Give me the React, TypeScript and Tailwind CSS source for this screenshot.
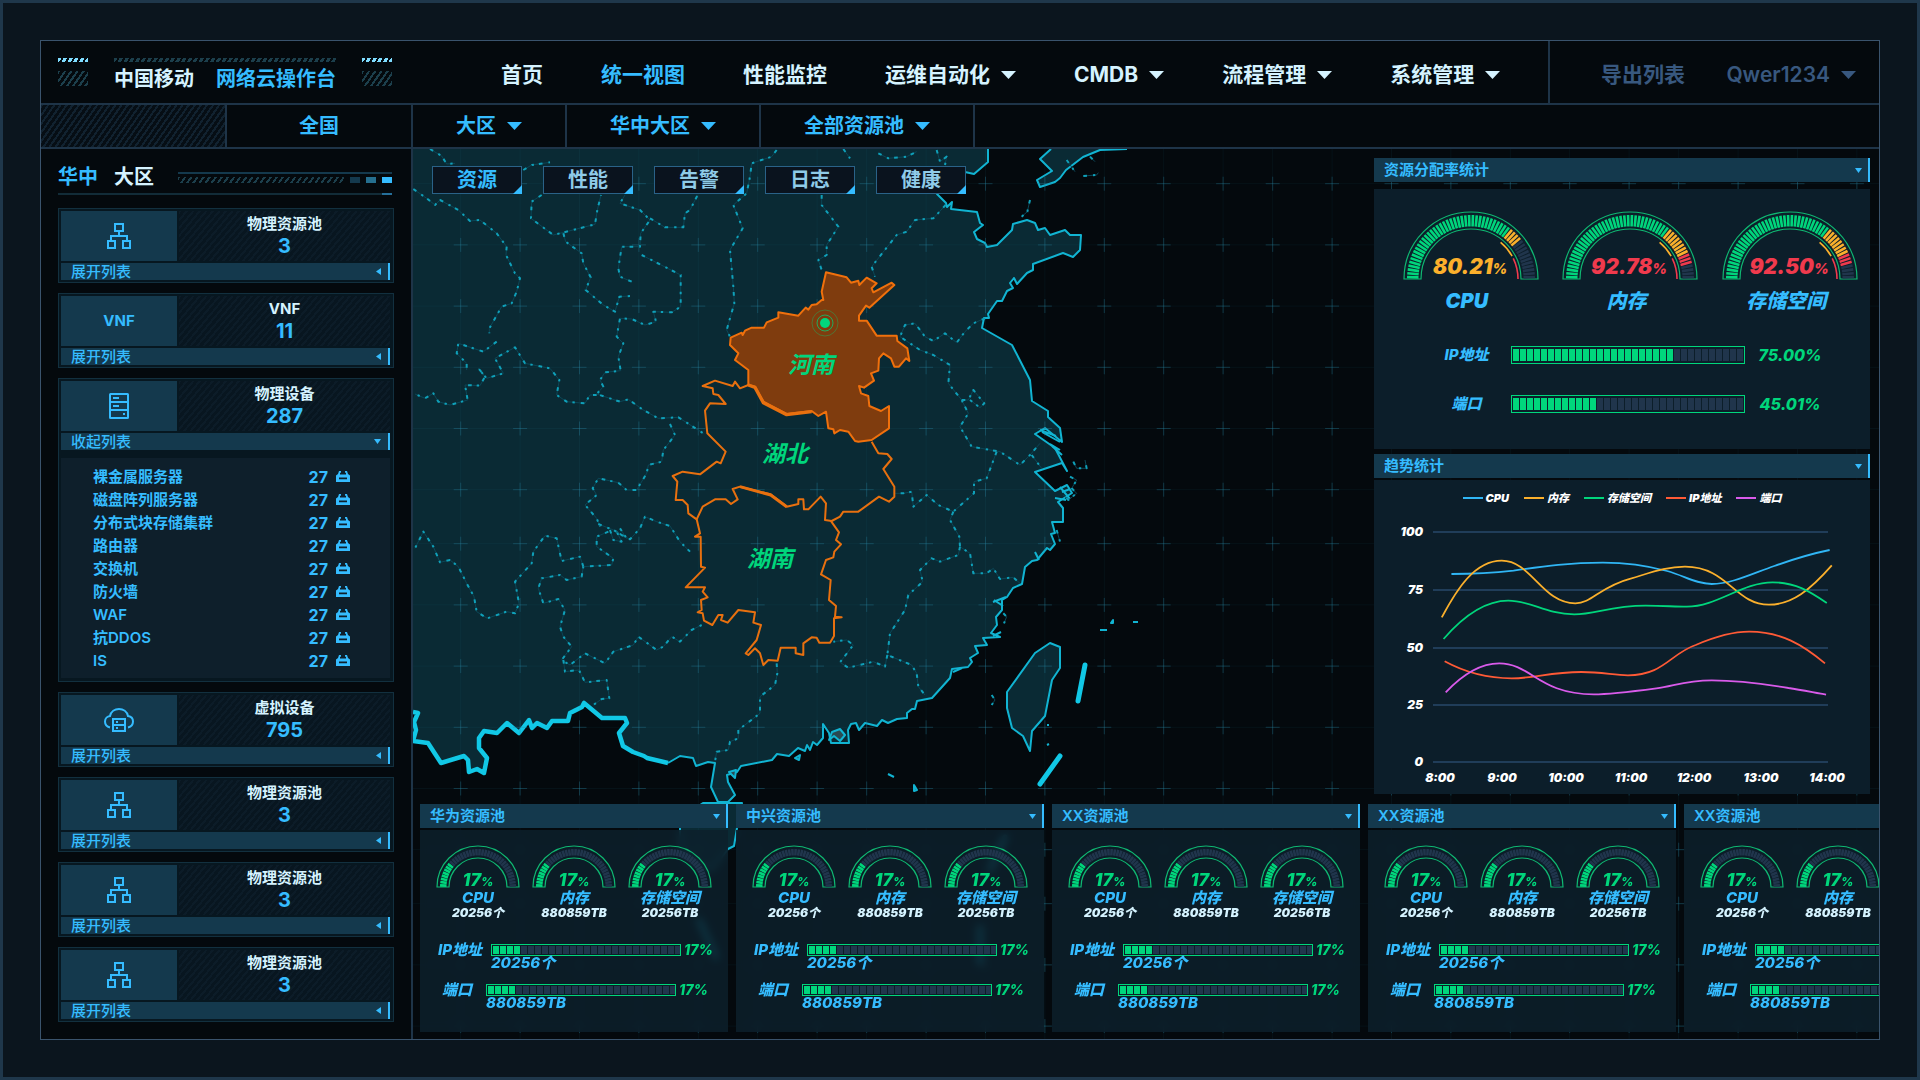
import type { ReactNode } from "react";

function Caret({ className = "" }: { className?: string }) {
  return (
    <svg className={"h-2 w-[15px] shrink-0 fill-current " + className} viewBox="0 0 15 8" aria-hidden="true">
      <path d="M0 0H15L7.500 8Z" />
    </svg>
  );
}

function NetworkIcon() {
  return (
    <svg width="24" height="26" viewBox="0 0 24 26" fill="none" stroke="currentColor" strokeWidth="2" aria-hidden="true">
      <rect x="8" y="1" width="8" height="7" />
      <path d="M12 9V13M4 17V13H20V17" />
      <rect x="1" y="18" width="7" height="7" />
      <rect x="16" y="18" width="7" height="7" />
    </svg>
  );
}

function ServerIcon() {
  return (
    <svg width="20" height="26" viewBox="0 0 20 26" fill="none" stroke="currentColor" strokeWidth="2" aria-hidden="true">
      <rect x="1" y="1" width="18" height="24" rx="0.500" />
      <path d="M1 9H19M1 17H19M4 5H10M4 13H10M14 21H16" />
    </svg>
  );
}

function CloudIcon() {
  return (
    <svg width="30" height="24" viewBox="0 0 30 24" fill="none" stroke="currentColor" strokeWidth="2" aria-hidden="true">
      <path d="M6 19.500C2.500 18.500 1 16 1 13.500C1 10.500 3.500 8.300 6 8C7 3.500 10.800 1 15 1C19.200 1 23 3.500 24 8C27 8.500 29 10.700 29 13.500C29 16.200 27.300 18.800 24 19.500" />
      <rect x="9" y="11" width="12" height="12" />
      <path d="M9 17H21" />
      <path d="M12 14H14M12 20H14" />
    </svg>
  );
}

function DeviceIcon() {
  return (
    <svg width="14" height="11" viewBox="0 0 14 11" fill="currentColor" aria-hidden="true">
      <path fillRule="evenodd" d="M3 0H5V1.500L4 2V3.500H10V2L9 1.500V0H11L12 3L14 4.500V11H0V4.500L2 3ZM3 6.500V8.300H11V6.500Z" />
    </svg>
  );
}

function ResourceCard({
  icon,
  title,
  count,
  children,
}: {
  icon: ReactNode;
  title: string;
  count: string;
  children?: ReactNode;
}) {
  const open = Boolean(children);
  return (
    <section className="border border-[#12303f] bg-[#071720] p-[2px] pr-[3px]">
      <div className="flex h-[50px] gap-[2px]">
        <div className="flex w-[116px] items-center justify-center bg-[#14394d] text-[15px] font-bold text-[#35bcff]">
          {icon}
        </div>
        <div className="flex flex-1 flex-col items-center bg-[#081620] bg-[repeating-linear-gradient(130deg,#0c1c28_0_2px,#081620_2px_5px)] pt-[3px]">
          <h3 className="text-[15px] leading-5 font-bold text-[#d5f3ff]">{title}</h3>
          <p className="text-xl leading-6 font-bold text-[#35bcff]">{count}</p>
        </div>
      </div>
      <button
        type="button"
        aria-expanded={open}
        className="mt-[2px] flex h-[17px] w-full items-center justify-between border-r-2 border-[#35bcff] bg-[#14394d] pr-[7px] pl-[10px] text-[15px] leading-[17px] font-medium text-[#35bcff]"
      >
        {open ? "收起列表" : "展开列表"}
        {open ? (
          <svg width="7" height="5" viewBox="0 0 7 5" fill="currentColor" aria-hidden="true">
            <path d="M0 0H7L3.500 5Z" />
          </svg>
        ) : (
          <svg width="5" height="7" viewBox="0 0 5 7" fill="currentColor" aria-hidden="true">
            <path d="M5 0V7L0 3.500Z" />
          </svg>
        )}
      </button>
      {children}
    </section>
  );
}

const devices = ["裸金属服务器", "磁盘阵列服务器", "分布式块存储集群", "路由器", "交换机", "防火墙", "WAF", "抗DDOS", "IS"];

function Sidebar() {
  return (
    <aside className="w-[372px] shrink-0 border-r-2 border-[#1e3448] pt-4 pr-[17px] pb-[17px] pl-[17px]">
      <header className="mr-[2px] flex h-7 justify-between">
        <h2 className="flex gap-4 text-xl leading-6 font-bold">
          <span className="text-[#35bcff]">华中</span>
          <span className="text-[#d5f3ff]">大区</span>
        </h2>
        <div className="flex w-[214px] flex-col gap-[3px] pt-[7px]">
          <div className="h-[2px] bg-[#14394d]" />
          <div className="flex h-[6px] gap-[6px]">
            <div className="flex-1 bg-[repeating-linear-gradient(125deg,#1c3f4c_0_2px,transparent_2px_5px)]" />
            <div className="w-[10px] bg-[#14394d]" />
            <div className="w-[10px] bg-[#256f8f]" />
            <div className="w-[10px] bg-[#35bcff]" />
          </div>
        </div>
      </header>
      <div className="mr-[2px] mb-[13px] flex h-[2px] justify-end bg-[#122c38]">
        <div className="w-[10px] bg-[#256f9a]" />
      </div>
      <div className="flex flex-col gap-[10px]">
        <ResourceCard icon={<NetworkIcon />} title="物理资源池" count="3" />
        <ResourceCard icon="VNF" title="VNF" count="11" />
        <ResourceCard icon={<ServerIcon />} title="物理设备" count="287">
          <ul className="mt-2 mb-px flex flex-col bg-[#0e1f2b] pt-[7px] pr-10 pb-[6px] pl-8">
            {devices.map((name) => (
              <li key={name} className="flex h-[23px] items-center text-[15px] leading-[23px] font-semibold text-[#35bcff]">
                <span className="flex-1">{name}</span>
                <span className="mr-2 text-base font-bold">27</span>
                <DeviceIcon />
              </li>
            ))}
          </ul>
        </ResourceCard>
        <ResourceCard icon={<CloudIcon />} title="虚拟设备" count="795" />
        <ResourceCard icon={<NetworkIcon />} title="物理资源池" count="3" />
        <ResourceCard icon={<NetworkIcon />} title="物理资源池" count="3" />
        <ResourceCard icon={<NetworkIcon />} title="物理资源池" count="3" />
      </div>
    </aside>
  );
}

function HatchMark() {
  return (
    <div className="flex w-[30px] flex-col gap-[9px]">
      <div className="h-1 bg-[repeating-linear-gradient(120deg,#7fdcff_0_3px,transparent_3px_5px)]" />
      <div className="h-[15px] bg-[repeating-linear-gradient(125deg,#1c3f4c_0_2px,transparent_2px_5px)]" />
    </div>
  );
}

const navItems = [
  { label: "首页", menu: false },
  { label: "统一视图", menu: false, active: true },
  { label: "性能监控", menu: false },
  { label: "运维自动化", menu: true },
  { label: "CMDB", menu: true },
  { label: "流程管理", menu: true },
  { label: "系统管理", menu: true },
];

function TopBar() {
  return (
    <header className="flex h-16 border-b-2 border-[#1e3448] text-[21px] leading-6 font-bold">
      <div className="flex w-[372px] shrink-0 gap-[26px] pt-[17px] pl-[17px]">
        <HatchMark />
        <div className="w-[222px]">
          <div className="h-1 bg-[repeating-linear-gradient(120deg,#1c3f4c_0_3px,transparent_3px_5px)]" />
          <h1 className="mt-[5px] flex justify-between text-xl leading-6 whitespace-nowrap">
            <span className="text-[#d5f3ff]">中国移动</span>
            <span className="text-[#35bcff]">网络云操作台</span>
          </h1>
        </div>
        <HatchMark />
      </div>
      <nav className="flex flex-1 gap-[58px] pt-[22px] pl-[88px] whitespace-nowrap text-[#d5f3ff]">
        {navItems.map((item) =>
          item.menu ? (
            <button key={item.label} type="button" aria-haspopup="menu" className="flex h-6 items-center gap-[11px]">
              {item.label}
              <Caret />
            </button>
          ) : (
            <a key={item.label} href="#" className={item.active ? "h-6 text-[#35bcff]" : "h-6"}>
              {item.label}
            </a>
          ),
        )}
      </nav>
      <div className="flex w-[331px] shrink-0 justify-between border-l-2 border-[#1e3448] pt-[22px] pr-[23px] pl-[51px] font-semibold text-[#38587f]">
        <button type="button" className="h-6">
          导出列表
        </button>
        <button type="button" aria-haspopup="menu" className="flex h-6 items-center gap-[11px]">
          Qwer1234
          <Caret />
        </button>
      </div>
    </header>
  );
}

function FilterSelect({ label, value }: { label: string; value: string }) {
  return (
    <label className="flex items-center gap-[11px] border-r-2 border-[#1e3448] px-[43px]">
      <span className="sr-only">{label}</span>
      <select
        className="field-sizing-content h-9 appearance-none bg-transparent text-xl leading-9 font-bold text-[#35bcff] outline-none"
        defaultValue={value}
      >
        <option value={value}>{value}</option>
      </select>
      <Caret className="pointer-events-none" />
    </label>
  );
}

function FilterBar() {
  return (
    <div className="flex h-11 border-b-2 border-[#1e3448] text-xl font-bold text-[#35bcff]">
      <div className="w-[186px] shrink-0 border-r-2 border-[#1e3448] bg-[repeating-linear-gradient(125deg,#112230_0_2px,#060e15_2px_5px)]" />
      <button type="button" className="w-[186px] shrink-0 border-r-2 border-[#1e3448]">
        全国
      </button>
      <FilterSelect label="范围" value="大区" />
      <FilterSelect label="大区" value="华中大区" />
      <FilterSelect label="资源池" value="全部资源池" />
    </div>
  );
}

const gridCols = Array.from({ length: 25 }, (_, i) => 460.700 + Math.floor(i / 7) * 406 + (i % 7) * 59.400);
const gridRows = Array.from({ length: 15 }, (_, i) => 183.700 + Math.floor(i / 6) * 360 + (i % 6) * 61.200);

const mainland =
  "M413 149H988V162L974 174L965 172L945 180L937 194L946 203L947 207L952 202L951 209L977 212L980 223L983 225L974 232L977 239L985 243L987 247L997 245L1002 240L1012 230L1013 224L1027 220L1035 223L1038 230L1045 228L1050 235L1065 230L1070 235H1081L1080 250L1073 257L1063 253L1033 264V270L1027 273L1017 284L1014 278L1010 283L1013 288L1007 291L1002 301L997 301L988 314L989 318L984 318L982 328L1012 345L1030 380L1032 401L1048 411V417L1060 428L1062 442L1045 428L1035 434L1055 448L1067 471L1062 463L1035 472L1055 491L1067 485L1072 493L1058 502L1063 508V522H1052L1055 533L1051 534L1055 544L1050 550L1047 548L1037 560L1032 561L1025 567L1022 584L1013 588L1007 597L1002 600V610L996 617L997 625L991 633L1000 637L983 638L987 645L975 646L978 653L970 658L972 662L968 667L952 669L950 678L932 698L917 701L915 709L912 709L907 713V718L897 719L888 723L882 720L877 726L865 723L859 730L856 723L851 724L848 730L849 743H831L829 733L823 724V738L817 745L813 742L810 750L807 745L805 751L798 748L789 756L777 754L772 760L741 766L737 772L727 775L728 782L735 795L728 802H718L711 787L715 763L708 762L696 766L693 758L680 756L668 763";
const southBorder =
  "L647 758L644 756L633 752L623 746L619 733L627 723L625 718H602L584 703L582 707L570 713L568 721H552L547 728L537 723L532 728L529 720L519 733L507 723L497 733L484 731L479 738V748L487 758L484 773L477 769L469 772L468 760L464 756L441 763L428 743L413 741L416 730L414 722L418 713L413 712";
const liaodong =
  "M1051 149L1040 159L1052 171L1037 180L1040 187L1055 182L1060 178L1066 170L1083 157L1100 150L1127 149";
const taiwan =
  "M1050 643L1060 647V668L1052 680L1045 716L1032 731L1030 751L1023 736L1012 728L1007 708V692L1035 653Z";
const hainan = "M703 803H742L737 828L734 846L728 849L712 870L690 862L680 846V828L690 812Z";

const bordersWest = [
  "90,27 125,48 140,72 165,70",
  "40,147 80,175 105,195 120,180 175,210 210,243 240,240 290,280 320,320 318,345 345,400 360,415 350,455 335,490 305,500 268,565 268,580",
  "290,605 250,635 175,610 170,640 200,670 200,690",
  "590,765 570,765 555,790 500,785 470,765 478,720 450,685 375,670 345,622 285,655 310,700 260,715 235,685 255,710 240,737 195,735 203,780 150,795 115,785 100,760 75,775 45,762",
  "370,90 395,75 450,67",
  "425,165 395,185 393,235 460,285 585,253 592,210 603,165",
  "490,280 497,305 545,340 550,370 572,412 557,450 610,495 645,515 658,470 690,468",
  "695,425 660,410 655,385 665,320 720,320 722,280 750,240 720,210 660,190 675,165",
  "750,235 795,262 850,262 855,220 870,210 893,165",
  "725,345 842,405 842,500 815,517 760,515 768,545 735,555 695,537 660,535 650,590 670,610 655,650 662,692 615,697 600,720 610,740 590,762 660,785 685,778 730,810 775,835 835,832 910,880",
  "810,852 825,885 790,930 785,965 745,975 740,1000 710,1050 680,1050 655,1028 595,1015 578,1045 590,1065 555,1095 590,1135 600,1160",
  "1130,30 1115,50 1055,70 1050,110 1040,160 1000,195 1028,265 990,330 1000,440 1003,490 980,570 990,590",
  "595,1152 640,1170 690,1198 720,1165 735,1130 770,1145 810,1158 840,1205 870,1235",
  "625,1175 590,1190 590,1220 640,1255 635,1275 550,1280 545,1310 500,1320 480,1305 425,1315 415,1345 430,1390 475,1377 495,1410 480,1460 490,1490 515,1520 485,1560 510,1575 555,1540 615,1570 640,1535 700,1515 715,1490 770,1530 790,1520 815,1490 840,1505 875,1470 905,1455",
  "630,1170 640,1200 665,1205 650,1175 680,1195 660,1165",
  "550,1280 540,1250 485,1263 470,1195 435,1187 400,1235 395,1270 345,1325 357,1390 345,1420 320,1415 262,1435 230,1415 222,1370 200,1330 175,1280 150,1260 120,1267 100,1220 70,1175 45,1225",
  "490,1560 495,1595 537,1590 555,1627 620,1620 628,1675 605,1677 580,1695",
  "1130,1570 1132,1600 1125,1635 1080,1670 1080,1720 1015,1770 1015,1795 990,1805 985,1830 950,1835 945,1865",
];

const bordersEast = [
  "65,165 65,195 115,260 80,315 80,345 55,360 65,390",
  "437,195 400,235 345,240 320,275 290,285 215,380 225,410",
  "235,40 265,55 320,50 350,35",
  "410,30 420,65 440,50 435,75",
  "130,27 150,55",
  "690,180 682,215 665,230",
  "555,535 520,550 495,575 470,608 435,580 400,603 375,590 345,550 315,555 300,590 360,630 400,645 450,675 445,730 485,780 505,820 480,860 515,920 600,935 660,975 690,945 720,910",
  "485,780 505,780 520,750 553,790 540,803 510,780",
  "695,945 725,985",
  "590,935 560,1015 522,1025 522,1060 460,1115 415,1095 380,1065 340,1100 335,1055 310,1060 285,1060",
  "460,1115 450,1140 478,1190 480,1220 510,1240 520,1300 560,1300 580,1285 600,1317 640,1312 660,1330",
  "480,1220 475,1245 420,1265 395,1255 360,1290 368,1325 325,1365 315,1410 270,1480 262,1545 335,1575 350,1600 355,1640 375,1665",
  "262,1545 255,1580 220,1565 145,1583 120,1567 160,1515 140,1500 100,1505",
  "800,60 825,95",
  "850,108 890,105 895,98",
  "870,50 885,65",
  "820,965 830,985 860,985 855,960",
  "810,1010 830,1020 815,1045 830,1060 805,1080 790,1065",
  "770,1170 780,1205",
  "610,1420 620,1430 612,1450",
  "575,1665 585,1680 575,1695",
];

const henan =
  "78,397 140,412 153,428 175,422 178,435 200,413 230,430 215,445 220,457 275,428 283,435 208,503 198,497 177,527 177,542 200,542 230,587 290,587 292,603 322,625 328,663 318,655 297,680 283,680 273,655 250,640 237,655 235,692 213,700 222,722 192,743 177,738 183,760 205,768 208,798 243,813 267,798 267,865 215,900 175,905 165,903 145,875 120,870 103,880 100,868 85,865 78,815 55,828 35,813 -40,822 -110,785 -135,740 -155,735 -155,690 -195,660 -185,640 -210,615 -208,593 -175,578 -172,585 -165,572 -145,563 -108,563 -100,547 -65,533 -65,517 -5,527 17,503 25,509 35,495 50,493 65,480 70,480 65,455";
const hubei =
  "-155,735 -180,745 -195,725 -202,738 -255,722 -292,738 -262,745 -260,762 -245,765 -223,792 -270,790 -285,812 -278,880 -223,935 -238,970 -250,965 -300,1003 -352,995 -382,1008 -368,1025 -373,1080 -352,1080 -337,1095 -335,1120 -310,1138 -292,1100 -255,1078 -223,1078 -207,1092 -187,1078 -202,1047 -180,1040 -88,1063 -40,1100 -5,1092 -5,1078 10,1078 12,1108 25,1108 62,1070 78,1090 75,1140 95,1143 120,1130 130,1115 175,1115 237,1070 267,1085 283,1070 283,1040 250,987 275,957 262,942 235,940 215,905";
const hunan =
  "-310,1138 -300,1180 -315,1190 -298,1190 -297,1280 -285,1283 -343,1342 -285,1342 -292,1355 -277,1372 -297,1380 -295,1410 -307,1417 -292,1420 -288,1442 -263,1455 -245,1425 -232,1425 -237,1440 -217,1448 -185,1410 -135,1417 -140,1448 -117,1455 -130,1500 -163,1540 -155,1545 -135,1525 -120,1540 -110,1575 -95,1560 -67,1562 -58,1523 -13,1523 -13,1540 10,1545 10,1510 35,1492 50,1493 58,1508 90,1508 102,1488 102,1435 125,1432 105,1430 108,1398 87,1380 92,1320 63,1303 78,1260 100,1252 103,1235 123,1213 108,1200 117,1177 92,1142";

function MapLabel({ x, y, children }: { x: number; y: number; children: string }) {
  return (
    <text x={x} y={y} textAnchor="middle" className="fill-[#00d67c] text-[23px] font-bold italic">
      {children}
    </text>
  );
}

function RegionMap() {
  return (
    <svg
      className="absolute inset-0 h-full w-full"
      viewBox="413 149 1466 890"
      preserveAspectRatio="xMinYMin slice"
      role="img"
      aria-label="华中大区地图"
    >
      <g fill="#0a2a34" stroke="#11b4d2" strokeWidth="2" strokeLinejoin="round">
        <path d={mainland + southBorder} stroke="none" />
        <path d={mainland.replace("H988", "M988 149")} fill="none" />
        <path d={liaodong} />
        <path d={taiwan} />
        <path d={hainan} />
        <path
          d="M1042 432L1060 442M1040 430L1056 436M1050 444L1060 450M1052 446L1062 455M1060 487L1070 499M1062 492L1070 489M1055 498L1066 500M993 602L1006 597M994 600L1003 606M993 636L1001 632M953 672L962 668M1035 552L1039 560"
          fill="none"
        />
        <path
          d="M829 740L832 732L840 729L845 735L840 741L834 736ZM795 758L800 755L799 760ZM729 772L736 770L735 778ZM914 806L918 822M888 774L894 777M914 785L917 790L914 791ZM1111 623H1113L1113 620ZM1100 630H1107M1133 622H1138M1047 725H1049M1047 745L1049 744"
          fill="#2a4a52"
        />
      </g>
      <path d={"M668 763" + southBorder} fill="none" stroke="#11c8e6" strokeWidth="4.500" strokeLinejoin="round" />
      <path
        d="M1085 665L1078 701M1060 756L1040 784M699 920L716 957M1005 837L990 870M980 927V963"
        stroke="#11c8e6"
        strokeWidth="5"
        strokeLinecap="round"
      />
      <g stroke="#2b87a3">
        {gridCols.map((x) => (
          <path key={x} d={`M${x} 149V1039`} strokeOpacity="0.070" />
        ))}
        {gridRows.map((y) => (
          <path key={y} d={`M413 ${y}H1879`} strokeOpacity="0.070" />
        ))}
        {gridRows.map((y) => (
          <path key={y} strokeOpacity="0.350" d={gridCols.map((x) => `M${x - 7} ${y}h14M${x} ${y - 7}v14`).join("")} />
        ))}
      </g>
      <g fill="none" strokeLinejoin="round">
        <g transform="translate(400 140) scale(.33333)">
          {bordersWest.map((p) => (
            <g key={p}>
              <polyline points={p} stroke="#0b4656" strokeWidth="3" />
              <polyline points={p} stroke="#0fa0b9" strokeWidth="6" strokeDasharray="11 18 7 15" />
            </g>
          ))}
        </g>
        <g transform="translate(800 140) scale(.33333)">
          {bordersEast.map((p) => (
            <g key={p}>
              <polyline points={p} stroke="#0b4656" strokeWidth="3" />
              <polyline points={p} stroke="#0fa0b9" strokeWidth="6" strokeDasharray="11 18 7 15" />
            </g>
          ))}
          <polyline points={hubei} stroke="#e8700f" strokeWidth="6" />
          <polyline points={hunan} stroke="#e8700f" strokeWidth="6" />
          <polygon points={henan} fill="#7f3c0e" stroke="#f0700c" strokeWidth="6" />
          <polyline points="-155,735 -135,742 -110,788 -40,824 35,815" stroke="#e8700f" strokeWidth="10" />
          <polyline points="-180,1040 -88,1065 -40,1100" stroke="#e8700f" strokeWidth="9" />
        </g>
      </g>
      <circle cx="825" cy="323" r="5" fill="#00d67c" />
      <circle cx="825" cy="323" r="8" fill="none" stroke="#00d67c" strokeOpacity="0.700" />
      <circle cx="825" cy="323" r="13" fill="none" stroke="#00d67c" strokeOpacity="0.350" />
      <MapLabel x={811} y={373}>河南</MapLabel>
      <MapLabel x={785} y={462}>湖北</MapLabel>
      <MapLabel x={770} y={567}>湖南</MapLabel>
    </svg>
  );
}

function PanelHeader({ title }: { title: string }) {
  return (
    <button
      type="button"
      aria-expanded="true"
      className="flex h-6 w-full items-center justify-between border-r-2 border-[#35bcff] bg-[#14394d] pr-[6px] pl-[10px] text-[15px] leading-6 font-semibold text-[#35bcff]"
    >
      {title}
      <svg width="7" height="5" viewBox="0 0 7 5" fill="currentColor" aria-hidden="true">
        <path d="M0 0H7L3.500 5Z" />
      </svg>
    </button>
  );
}

function polar(r: number, deg: number) {
  const a = (deg * Math.PI) / 180;
  return `${(-r * Math.cos(a)).toFixed(2)} ${(-r * Math.sin(a)).toFixed(2)}`;
}

function arc(r: number, from: number, to: number) {
  return `M${polar(r, from)}A${r} ${r} 0 0 1 ${polar(r, to)}`;
}

type GaugeProps = {
  outer: number;
  inner: number;
  ticks: number;
  green: number;
  yellow?: number;
  red?: number;
  children: ReactNode;
  warn?: boolean;
};

function Gauge({ outer, inner, ticks, green, yellow = green, red = yellow, warn, children }: GaugeProps) {
  const step = 180 / ticks;
  const tickColor = (i: number) => (i < green ? "#00d67c" : i < yellow ? "#fbb02c" : i < red ? "#f03a4d" : "#20354c");
  const w = outer + 1;
  return (
    <svg width={w * 2} height={outer + 3} viewBox={`${-w} ${-outer - 1} ${w * 2} ${outer + 3}`} role="img">
      <path
        d={`M${-outer} 0A${outer} ${outer} 0 0 1 ${outer} 0H${inner}A${inner} ${inner} 0 0 0 ${-inner} 0Z`}
        fill="none"
        stroke="#0fb872"
        strokeWidth="1.200"
      />
      {Array.from({ length: ticks }, (_, i) => (
        <path
          key={i}
          d={`M${polar(inner + 2.500, (i + 0.500) * step)}L${polar(outer - 3, (i + 0.500) * step)}`}
          stroke={tickColor(i)}
          strokeWidth="2.600"
        />
      ))}
      {warn && (
        <g fill="none" strokeWidth="1.600">
          <path d={arc(inner - 3, 129, 151)} stroke="#fbb02c" />
          <path d={arc(inner - 3, 154, 180)} stroke="#f03a4d" />
        </g>
      )}
      {children}
    </svg>
  );
}

function SegmentBar({ total, filled, small, label }: { total: number; filled: number; small?: boolean; label: string }) {
  return (
    <div
      role="meter"
      aria-label={label}
      aria-valuemin={0}
      aria-valuemax={total}
      aria-valuenow={filled}
      className={
        small
          ? "flex h-3 w-[190px] shrink-0 gap-px overflow-hidden border border-[#00d67c] p-px"
          : "flex h-[18px] w-[234px] shrink-0 gap-px overflow-hidden border border-[#00d67c] px-px py-[2px]"
      }
    >
      {Array.from({ length: total }, (_, i) => (
        <span key={i} className={i < filled ? "w-[6px] shrink-0 bg-[#00d67c]" : "w-[6px] shrink-0 bg-[#20354c]"} />
      ))}
    </div>
  );
}

const allocation = [
  { name: "CPU", value: "80.21", yellow: 41, red: 41, color: "fill-[#fbb02c]" },
  { name: "内存", value: "92.78", yellow: 45, red: 48, color: "fill-[#f03a4d]" },
  { name: "存储空间", value: "92.50", yellow: 45, red: 48, color: "fill-[#f03a4d]" },
];

function AllocationPanel() {
  return (
    <section>
      <PanelHeader title="资源分配率统计" />
      <div className="mt-[7px] h-[260px] bg-[#0c1e2a] pt-[22px]">
        <div className="ml-[17px] grid grid-cols-3">
          {allocation.map((g) => (
            <div key={g.name} className="flex flex-col items-center">
              <Gauge outer={67} inner={50} ticks={52} green={37} yellow={g.yellow} red={g.red} warn>
                <text x="-1" y="-5" textAnchor="middle" className={"text-[21px] font-black italic " + g.color}>
                  {g.value}
                  <tspan className="text-sm">%</tspan>
                </text>
              </Gauge>
              <p className="mr-2 text-xl leading-10 font-black text-[#35bcff] italic">{g.name}</p>
            </div>
          ))}
        </div>
        <div className="mt-[25px] flex flex-col gap-[31px] text-[15px] leading-[18px] font-extrabold italic">
          {[
            { name: "IP地址", filled: 23, value: "75.00%" },
            { name: "端口", filled: 12, value: "45.01%" },
          ].map((row) => (
            <div key={row.name} className="flex h-[18px] items-center">
              <span className="w-[137px] pl-[48px] text-center text-[#35bcff]">{row.name}</span>
              <SegmentBar total={33} filled={row.filled} label={row.name} />
              <span className="w-[90px] text-center text-base leading-[18px] text-[#00d67c]">{row.value}</span>
            </div>
          ))}
        </div>
      </div>
    </section>
  );
}

const series = [
  { name: "CPU", color: "#30b6f5", d: "M256 402C330 402 380 398 430 392C520 378 590 368 680 368C750 368 800 376 860 393C910 408 940 432 985 432C1040 432 1100 400 1160 378C1220 355 1260 342 1315 330" },
  { name: "内存", color: "#fbb02c", d: "M229 532C270 450 320 362 397 362C480 362 510 490 603 490C650 490 670 440 760 415C820 396 860 380 910 380C1030 380 1050 494 1145 494C1210 494 1260 450 1321 376" },
  { name: "存储空间", color: "#00d67c", d: "M234 597C280 540 340 482 415 482C480 482 520 523 600 523C660 523 700 497 800 497C850 497 880 500 915 500C1000 500 1070 427 1155 427C1220 427 1260 455 1307 489" },
  { name: "IP地址", color: "#ff5a36", d: "M237 664C290 695 350 715 425 715C490 715 530 696 620 696C680 696 710 706 750 706C850 706 870 640 940 615C990 592 1040 575 1090 575C1180 575 1240 615 1302 670" },
  { name: "端口", color: "#d95bea", d: "M240 757C290 700 340 670 390 670C480 670 500 763 655 763C700 763 780 752 830 745C880 738 910 721 985 721C1050 721 1150 735 1200 744C1240 750 1280 760 1305 764" },
];

const yTicks = [
  { label: "100", y: 532 },
  { label: "75", y: 590 },
  { label: "50", y: 648 },
  { label: "25", y: 705 },
  { label: "0", y: 762 },
];

const xTicks = [
  { label: "8:00", x: 1440 },
  { label: "9:00", x: 1502 },
  { label: "10:00", x: 1566 },
  { label: "11:00", x: 1631 },
  { label: "12:00", x: 1694 },
  { label: "13:00", x: 1761 },
  { label: "14:00", x: 1827 },
];

function TrendPanel() {
  return (
    <section>
      <PanelHeader title="趋势统计" />
      <div className="mt-[2px] h-[314px] bg-[#0c1e2a] pt-[10px]">
        <ul className="flex h-4 items-center justify-center gap-[15px] text-[11px] leading-4 font-black text-white italic">
          {series.map((s) => (
            <li key={s.name} className="flex items-center gap-[3px]">
              <span className="h-[2px] w-5" style={{ background: s.color }} />
              {s.name}
            </li>
          ))}
        </ul>
        <svg className="block w-full" viewBox="1374 506 496 288" role="img" aria-label="趋势统计">
          {yTicks.map((t) => (
            <g key={t.label}>
              <path d={`M1433 ${t.y}H1828`} stroke="#27486a" strokeWidth="1.500" />
              <text x="1423" y={t.y + 4} textAnchor="end" className="fill-white text-xs font-black italic">
                {t.label}
              </text>
            </g>
          ))}
          {xTicks.map((t) => (
            <text key={t.label} x={t.x} y="782" textAnchor="middle" className="fill-white text-xs font-black italic">
              {t.label}
            </text>
          ))}
          <g transform="translate(1360 440) scale(.35714 .33333)" fill="none">
            {series.map((s) => (
              <path key={s.name} d={s.d} stroke={s.color} strokeWidth="1.800" vectorEffect="non-scaling-stroke" />
            ))}
          </g>
        </svg>
      </div>
    </section>
  );
}

const poolGauges = [
  { name: "CPU", value: "20256个" },
  { name: "内存", value: "880859TB" },
  { name: "存储空间", value: "20256TB" },
];

function PoolCard({ title }: { title: string }) {
  return (
    <section className="w-[308px] shrink-0">
      <PanelHeader title={title} />
      <div className="mt-[2px] h-[202px] bg-[#0d202c]/85 pt-[15px] backdrop-blur-[4px]">
        <div className="grid grid-cols-3 px-[10px]">
          {poolGauges.map((g) => (
            <div key={g.name} className="flex flex-col items-center">
              <Gauge outer={41} inner={29} ticks={36} green={8}>
                <text x="0" y="-1" textAnchor="middle" className="fill-[#00d67c] text-lg font-extrabold italic">
                  17<tspan className="text-xs">%</tspan>
                </text>
              </Gauge>
              <p className="text-[15px] leading-[18px] font-extrabold text-[#35bcff] italic">{g.name}</p>
              <p className="text-xs leading-3 font-black text-[#d5f3ff] italic">{g.value}</p>
            </div>
          ))}
        </div>
        <div className="mt-[25px] flex flex-col gap-[14px] pl-[18px] text-[15px] leading-[14px] font-extrabold italic">
          <div>
            <div className="flex h-3 items-center">
              <span className="w-[53px] text-[#35bcff]">IP地址</span>
              <SegmentBar total={27} filled={4} small label="IP地址" />
              <span className="ml-[3px] text-sm leading-[14px] text-[#00d67c]">17%</span>
            </div>
            <p className="ml-[53px] text-[#35bcff]">20256个</p>
          </div>
          <div>
            <div className="flex h-3 items-center">
              <span className="w-12 pl-1 text-[#35bcff]">端口</span>
              <SegmentBar total={27} filled={4} small label="端口" />
              <span className="ml-[3px] text-sm leading-[14px] text-[#00d67c]">17%</span>
            </div>
            <p className="ml-12 text-[#35bcff]">880859TB</p>
          </div>
        </div>
      </div>
    </section>
  );
}

function ViewTabs() {
  return (
    <div role="tablist" className="mt-[17px] ml-[19px] flex gap-[21px]">
      {["资源", "性能", "告警", "日志", "健康"].map((name, i) => (
        <button
          key={name}
          type="button"
          role="tab"
          aria-selected={i === 0}
          className={
            "relative h-7 w-[90px] border border-[#2a6288] bg-[#0a131e] text-xl leading-[26px] font-bold " +
            (i === 0 ? "text-[#35bcff]" : "text-[#8fcbe8]")
          }
        >
          {name}
          <svg className="absolute -right-px -bottom-px" width="9" height="9" viewBox="0 0 9 9" fill="#35bcff" aria-hidden="true">
            <path d="M9 0V9H0Z" />
          </svg>
        </button>
      ))}
    </div>
  );
}

export default function App() {
  return (
    <div className="flex min-h-screen border-[3px] border-[#1f374b] bg-[#0b151e] p-[37px] font-['Inter','Noto_Sans_CJK_SC',sans-serif]">
      <div className="flex min-w-0 flex-1 flex-col border border-[#3a536c] bg-[#04090d]">
        <TopBar />
        <FilterBar />
        <div className="flex min-w-0 flex-1">
          <Sidebar />
          <main className="relative min-w-0 flex-1 overflow-hidden">
            <RegionMap />
            <div className="relative flex items-start justify-between">
              <ViewTabs />
              <div className="mt-[9px] mr-[9px] flex w-[496px] flex-col gap-[5px]">
                <AllocationPanel />
                <TrendPanel />
              </div>
            </div>
            <div className="relative mt-[10px] flex gap-2 overflow-hidden pl-[7px]">
              {["华为资源池", "中兴资源池", "XX资源池", "XX资源池", "XX资源池"].map((title, i) => (
                <PoolCard key={i} title={title} />
              ))}
            </div>
          </main>
        </div>
      </div>
    </div>
  );
}
